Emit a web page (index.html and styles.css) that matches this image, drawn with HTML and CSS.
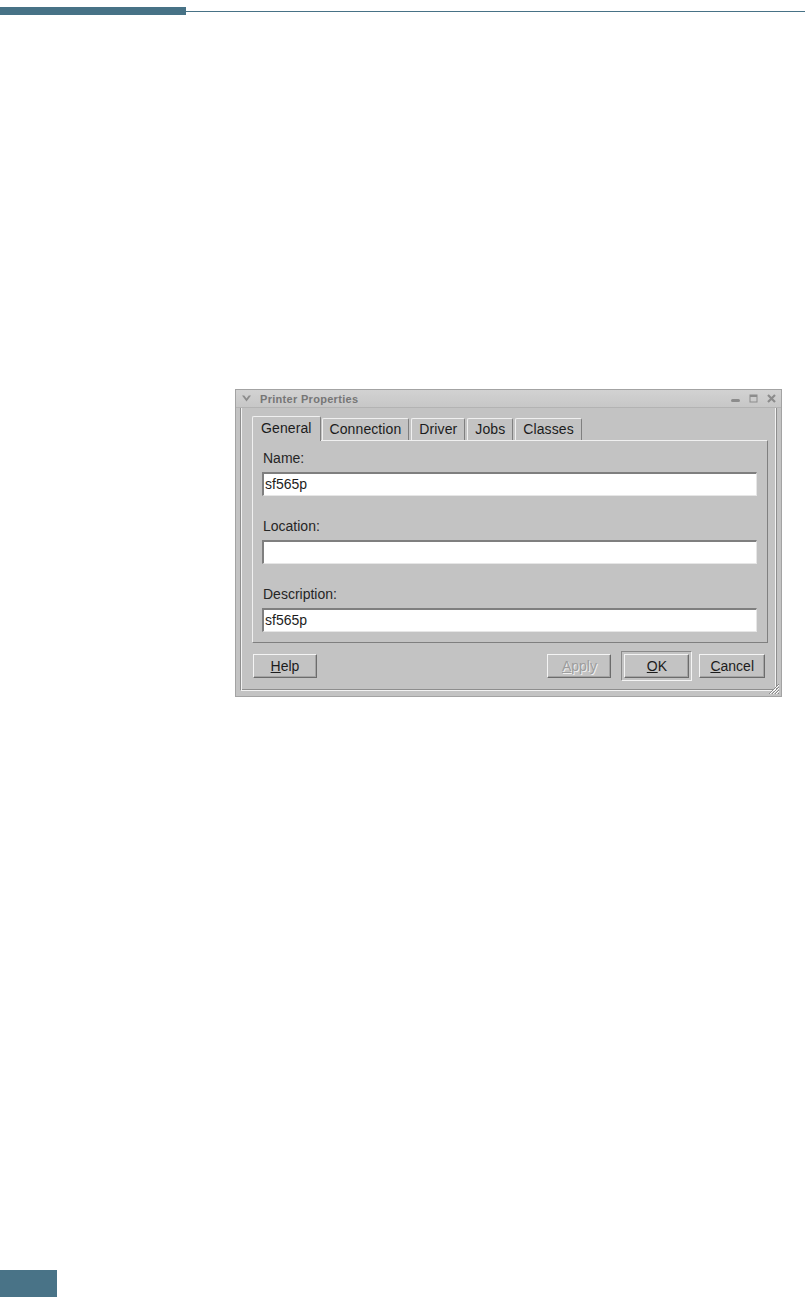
FILE: index.html
```html
<!DOCTYPE html>
<html lang="en">
<head>
  <meta charset="UTF-8" />
  <title>Printer Properties</title>
  <meta name="viewport" content="width=device-width, initial-scale=1.0" />
  <link rel="stylesheet" href="styles.css">
</head>
<body>
<div class="page">

  <!-- top rule of the manual page -->
  <div class="rule">
    <div class="rule-bar"></div>
    <div class="rule-line"></div>
  </div>

  <!-- screenshot of the dialog -->
  <div class="figure">
    <div class="window">
      <div class="titlebar">
        <svg class="tb-menu" width="9" height="7" viewBox="0 0 9 7"><path d="M0 0.5 L4.5 6.5 L9 0.5 L6.8 0.5 L4.5 3.5 L2.2 0.5 Z" fill="#8c8c8c"/></svg>
        <span class="tb-title">Printer Properties</span>
        <div class="tb-buttons">
          <svg width="9" height="9" viewBox="0 0 9 9"><rect x="0" y="5" width="9" height="3" rx="1.5" fill="#8c8c8c"/></svg>
          <svg width="9" height="9" viewBox="0 0 9 9"><rect x="1" y="1" width="7" height="7" fill="none" stroke="#8c8c8c" stroke-width="1"/><rect x="1" y="1" width="7" height="2" fill="#8c8c8c"/></svg>
          <svg width="9" height="9" viewBox="0 0 9 9"><path d="M1 1 L8 8 M8 1 L1 8" stroke="#8c8c8c" stroke-width="2.2"/></svg>
        </div>
      </div>

      <div class="client">
        <div class="tabs">
          <div class="tab active">General</div>
          <div class="tab">Connection</div>
          <div class="tab">Driver</div>
          <div class="tab">Jobs</div>
          <div class="tab">Classes</div>
        </div>

        <div class="panel">
          <div class="field">
            <label>Name:</label>
            <div class="input">sf565p</div>
          </div>
          <div class="field">
            <label>Location:</label>
            <div class="input"></div>
          </div>
          <div class="field">
            <label>Description:</label>
            <div class="input">sf565p</div>
          </div>
        </div>

        <div class="actions">
          <button class="btn"><u>H</u>elp</button>
          <div class="spacer"></div>
          <button class="btn disabled"><u>A</u>pply</button>
          <div class="default-frame">
            <button class="btn"><u>O</u>K</button>
          </div>
          <button class="btn"><u>C</u>ancel</button>
        </div>
      </div>

      <svg class="grip" width="13" height="13" viewBox="0 0 13 13">
        <path d="M12 2 L2 12 M12 5 L5 12 M12 8 L8 12 M12 11 L11 12" stroke="#8a8a8a" stroke-width="1"/>
        <path d="M12 3 L3 12 M12 6 L6 12 M12 9 L9 12" stroke="#ffffff" stroke-width="1"/>
      </svg>
    </div>
  </div>

  <div class="page-tab"></div>
</div>
</body>
</html>
```

FILE: styles.css
```css
body {
  margin: 0;
  background: #fff;
  font-family: 'Liberation Sans', Arial, sans-serif;
  color: #000;
}

.page {
  height: 1297px;
  display: flex;
  flex-direction: column;
}

.rule {
  display: flex;
  align-items: center;
  margin-top: 7px;
  height: 8px;
}

.rule-bar {
  width: 186px;
  height: 8px;
  background: #477286;
}

.rule-line {
  flex: 1;
  height: 1px;
  margin-right: 1px;
  background: #477286;
}

.figure {
  margin: 374px 0 0 235px;
}

.window {
  position: relative;
  box-sizing: border-box;
  width: 547px;
  height: 308px;
  background: #c3c3c3;
  border: 1px solid #a3a3a3;
  display: flex;
  flex-direction: column;
}

.titlebar {
  height: 17px;
  display: flex;
  align-items: center;
  padding: 0 5px 0 6px;
  background: linear-gradient(#d2d2d2, #c7c7c7);
  border-bottom: 1px solid #b3b3b3;
}

.tb-menu {
  margin-right: 9px;
}

.tb-title {
  font-size: 11px;
  font-weight: bold;
  letter-spacing: 0.3px;
  color: #767676;
}

.tb-buttons {
  margin-left: auto;
  display: flex;
  gap: 9px;
  align-items: center;
}

.client {
  flex: 1;
  margin: 0 4px 5px 4px;
  border-left: 1px solid #8e8e8e;
  border-right: 1px solid #8e8e8e;
  border-bottom: 1px solid #f2f2f2;
  box-shadow: inset 1px 0 #f2f2f2, inset -1px 0 #f2f2f2, inset 0 -1px #8e8e8e;
  padding: 8px 8px 0 11px;
}

.tabs {
  display: flex;
  align-items: flex-end;
  height: 24px;
  padding-left: 2px;
  gap: 2px;
}

.tab {
  position: relative;
  height: 21px;
  line-height: 20px;
  padding: 0 7px;
  font-size: 14px;
  letter-spacing: 0.1px;
  color: #1c1c1c;
  background: #c3c3c3;
  border: 1px solid;
  border-bottom: none;
  border-color: #f0f0f0 #7f7f7f #7f7f7f #f0f0f0;
  border-radius: 2px 2px 0 0;
}

.tab.active {
  height: 24px;
  line-height: 22px;
  margin: 0 -1px -1px -2px;
  padding: 0 8px;
  z-index: 1;
}

.panel {
  width: 516px;
  box-sizing: border-box;
  border: 1px solid;
  border-color: #f0f0f0 #7f7f7f #7f7f7f #f0f0f0;
  padding: 9px 10px 10px 9px;
}

.field label {
  display: block;
  font-size: 14px;
  line-height: 17px;
  color: #262626;
  margin-bottom: 5px;
  padding-left: 1px;
}

.field + .field {
  margin-top: 22px;
}

.input {
  box-sizing: border-box;
  height: 24px;
  background: #fff;
  border-top: 2px solid #7f7f7f;
  border-left: 2px solid #7f7f7f;
  border-right: 1px solid #e6e6e6;
  border-bottom: 1px solid #e6e6e6;
  font-size: 14px;
  line-height: 20px;
  padding-left: 1px;
  color: #1c1c1c;
}

.actions {
  display: flex;
  align-items: center;
  height: 30px;
  margin-top: 8px;
  padding: 0 3px 0 1px;
}

.spacer {
  flex: 1;
}

.btn {
  box-sizing: border-box;
  height: 24px;
  min-width: 64px;
  padding: 0 10px;
  font-family: inherit;
  font-size: 14px;
  color: #1c1c1c;
  background: #c3c3c3;
  border: 1px solid;
  border-color: #f4f4f4 #6c6c6c #6c6c6c #f4f4f4;
  box-shadow: inset -1px -1px #a4a4a4;
}

.btn.disabled {
  color: #9d9d9d;
  text-shadow: 1px 1px #f0f0f0;
}

.default-frame {
  display: flex;
  padding: 2px;
  margin: 0 7px 0 10px;
  border: 1px solid;
  border-color: #8a8a8a #f4f4f4 #f4f4f4 #8a8a8a;
}

.default-frame .btn {
  min-width: 65px;
}

.grip {
  position: absolute;
  right: 1px;
  bottom: 1px;
}

.page-tab {
  margin-top: auto;
  width: 57px;
  height: 27px;
  background: #497387;
}
```
